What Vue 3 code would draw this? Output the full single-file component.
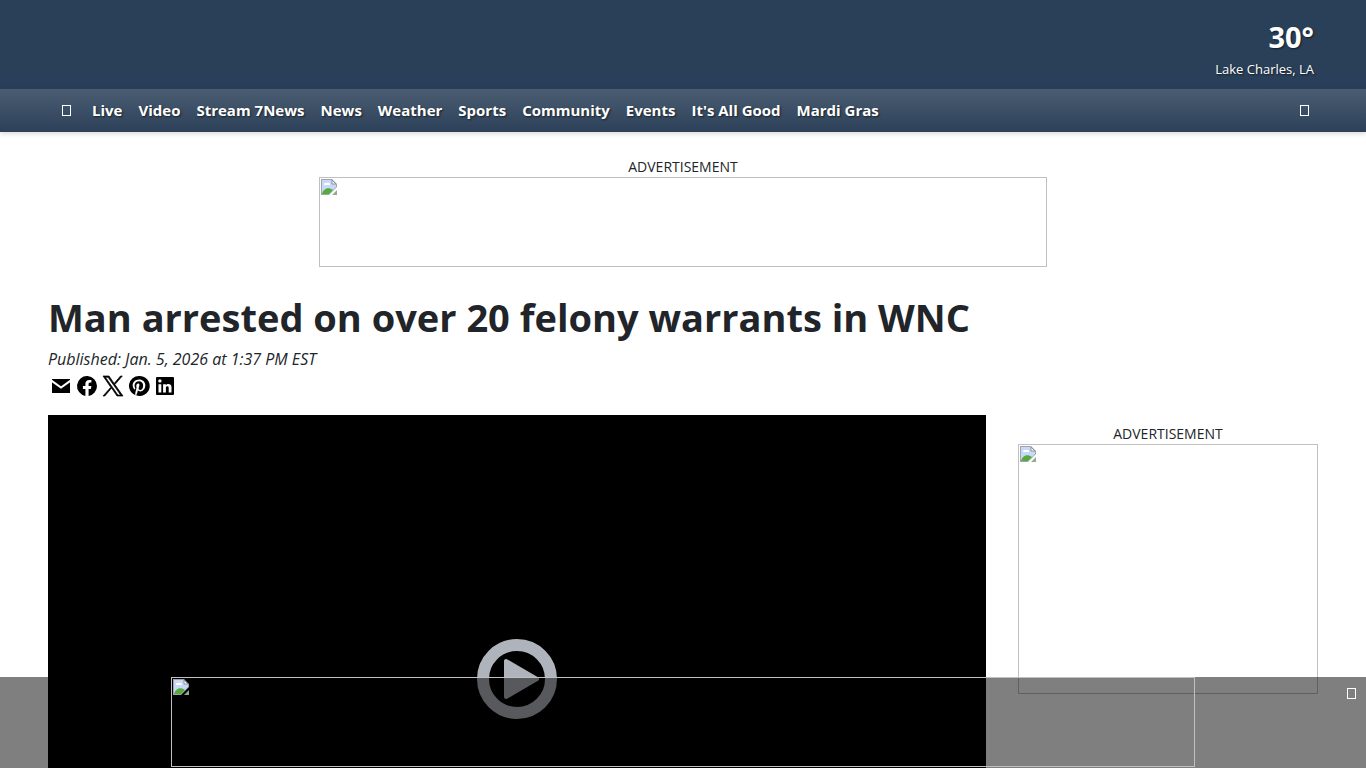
<script setup>
const links = ['Live', 'Video', 'Stream 7News', 'News', 'Weather', 'Sports', 'Community', 'Events', "It's All Good", 'Mardi Gras']
const shares = [
  { name: 'Email', path: 'M3 5h18v14H3z' },
  { name: 'Facebook', path: 'M22 12a10 10 0 1 0-11.6 9.9v-7H7.9V12h2.5V9.8c0-2.5 1.5-3.9 3.8-3.9 1.1 0 2.2.2 2.2.2v2.5h-1.2c-1.2 0-1.6.8-1.6 1.5V12h2.8l-.5 2.9h-2.3v7A10 10 0 0 0 22 12z' },
  { name: 'X', path: 'M13.9 10.5 21.3 2h-1.8l-6.4 7.4L8 2H2l7.8 11.3L2 22h1.8l6.8-7.9L16 22h6zm-2.4 2.8-.8-1.1L4.4 3.3h2.7l5.1 7.2.8 1.1 6.6 9.4h-2.7z' },
  { name: 'Pinterest', path: 'M12 2a10 10 0 0 0-3.7 19.3c-.1-.8-.1-2 .1-2.9l1.2-5s-.3-.6-.3-1.5c0-1.4.8-2.4 1.8-2.4.9 0 1.3.6 1.3 1.4 0 .8-.5 2.1-.8 3.3-.2 1 .5 1.8 1.5 1.8 1.8 0 3.1-1.9 3.1-4.6 0-2.4-1.7-4.1-4.2-4.1-2.8 0-4.5 2.1-4.5 4.3 0 .9.3 1.8.7 2.3.1.1.1.2.1.3l-.3 1.1c0 .2-.1.2-.3.1-1.2-.6-2-2.4-2-3.8 0-3.1 2.3-6 6.5-6 3.4 0 6.1 2.4 6.1 5.7 0 3.4-2.1 6.1-5.1 6.1-1 0-1.9-.5-2.3-1.1l-.6 2.4c-.2.9-.8 1.9-1.2 2.6A10 10 0 1 0 12 2z' },
  { name: 'LinkedIn', path: 'M20 3a1 1 0 0 1 1 1v16a1 1 0 0 1-1 1H4a1 1 0 0 1-1-1V4a1 1 0 0 1 1-1zm-1.5 15.5v-5.3a3.3 3.3 0 0 0-3.3-3.2c-.8 0-1.8.5-2.3 1.3v-1.1h-2.8v8.3h2.8v-4.9a1.4 1.4 0 0 1 2.8 0v4.9zM6.9 8.6a1.7 1.7 0 1 0 0-3.4 1.7 1.7 0 0 0 0 3.4zm1.4 9.9v-8.3H5.5v8.3z' }
]
</script>

<template>
  <div class="page">
    <header>
      <div class="masthead">
        <div class="temp">30°</div>
        <div class="place">Lake Charles, LA</div>
      </div>
      <nav>
        <button class="icon-btn menu" type="button" aria-label="Menu"><span class="tofu"></span></button>
        <a v-for="l in links" :key="l" href="#">{{ l }}</a>
        <button class="icon-btn search" type="button" aria-label="Search"><span class="tofu"></span></button>
      </nav>
    </header>

    <main>
      <aside class="top-ad">
        <div class="ad-label">ADVERTISEMENT</div>
        <div class="ad leaderboard">
          <svg class="broken" viewBox="0 0 16 16"><use href="#broken-image" /></svg>
        </div>
      </aside>

      <h1>Man arrested on over 20 felony warrants in WNC</h1>
      <p class="published">Published: Jan. 5, 2026 at 1:37 PM EST</p>
      <div class="shares">
        <a v-for="s in shares" :key="s.name" href="#" :aria-label="s.name">
          <svg viewBox="0 0 24 24">
            <path :d="s.path" fill-rule="evenodd" :class="{ bold: s.name === 'X' }" />
            <path v-if="s.name === 'Email'" d="M2 6.4l10 7.2 10-7.2" fill="none" stroke="#fff" stroke-width="2" />
          </svg>
        </a>
      </div>

      <div class="columns">
        <div class="video">
          <button class="play" type="button" aria-label="Play video">
            <svg viewBox="0 0 80 80">
              <circle cx="40" cy="40" r="34" fill="none" stroke="#afb3bb" stroke-width="12" />
              <path d="M29 22v36l31-18z" fill="#afb3bb" stroke="#afb3bb" stroke-width="4" stroke-linejoin="round" />
            </svg>
          </button>
        </div>
        <aside class="side">
          <div class="ad-label">ADVERTISEMENT</div>
          <div class="ad rectangle">
            <svg class="broken" viewBox="0 0 16 16"><use href="#broken-image" /></svg>
          </div>
        </aside>
      </div>
    </main>

    <div class="sticky-ad">
      <div class="ad anchor">
        <svg class="broken" viewBox="0 0 16 16"><use href="#broken-image" /></svg>
      </div>
      <button class="close" type="button" aria-label="Close advertisement"><span class="tofu"></span></button>
    </div>

    <svg class="defs" aria-hidden="true">
      <symbol id="broken-image" viewBox="0 0 16 16">
        <path d="M0 0h11l5 5v3l-8 8H0z" fill="#a0a4aa" />
        <path d="M1 1h10v4h4v3l-7 7H1z" fill="#c8d8f8" />
        <path d="M3 6a2 2 0 0 1 3-2 2 2 0 0 1 3 2z" fill="#fff" />
        <path d="M1 15c1-5 6-8 11-4l-4 4z" fill="#56ab3e" />
        <path d="M11 1v4h4z" fill="#fff" stroke="#8c9198" />
        <path d="M16 11v5h-5z" fill="#8fae88" />
      </symbol>
    </svg>
  </div>
</template>

<style>
body { margin: 0; background: #fff; }
</style>

<style scoped>
.page { font-family: "Segoe UI", "Open Sans", "Noto Sans", sans-serif; color: #212529; }
a { color: inherit; text-decoration: none; }
button { padding: 0; border: 0; background: none; color: inherit; cursor: pointer; }
header { color: #fff; box-shadow: 0 2px 5px rgba(0, 0, 0, .15); }
.masthead {
  box-sizing: border-box;
  height: 89px;
  padding: 17px 52px 0;
  background: linear-gradient(#2a4059 80%, #293d5a);
  text-align: right;
  text-shadow: 1px 1px 2px rgba(0, 0, 0, .6);
}
.temp { font-size: 29px; line-height: 40px; font-weight: 700; }
.place { font-size: 13px; line-height: 24px; }
nav {
  display: flex;
  align-items: center;
  gap: 16px;
  height: 43px;
  padding: 0 48px;
  background: linear-gradient(#4a5d72, #2c4059);
  font-size: 15px;
  font-weight: 700;
  text-shadow: 1px 1px 2px rgba(0, 0, 0, .6);
}
nav a { padding-bottom: 2px; white-space: nowrap; }
.icon-btn { display: flex; justify-content: center; width: 28px; }
.menu { width: 36px; margin-right: -8px; }
.search { margin-left: auto; }
.tofu { display: block; box-sizing: border-box; width: 9px; height: 11px; border: 1px solid #fff; }
main { padding: 24px 48px 0; }
.ad-label { font-size: 14px; line-height: 21px; text-align: center; }
.ad { box-sizing: border-box; border: 1px solid #c0c0c0; padding: 1px; }
.broken { display: block; width: 16px; height: 16px; }
.leaderboard { max-width: 728px; height: 90px; margin: 0 auto; }
h1 { margin: 24px 0 0; font-size: 38px; line-height: 52px; font-weight: 700; }
.published { margin: 4px 0 0; font-size: 16px; line-height: 24px; font-style: italic; }
.shares { display: flex; gap: 2px; margin-top: 3px; padding-left: 1px; }
.shares a { display: block; width: 24px; height: 24px; }
.shares svg { display: block; width: 24px; height: 24px; }
.bold { stroke: #000; stroke-width: .7; }
.columns { display: grid; grid-template-columns: minmax(0, 1fr) 300px; gap: 32px; align-items: start; margin-top: 17px; }
.video { display: flex; align-items: center; justify-content: center; aspect-ratio: 16 / 9; background: #000; }
.play, .play svg { display: block; width: 80px; height: 80px; }
.side { padding-top: 8px; }
.rectangle { height: 250px; }
.sticky-ad {
  position: fixed;
  right: 0;
  bottom: 0;
  left: 0;
  padding-bottom: 1px;
  background: rgba(0, 0, 0, .5);
  color: #fff;
}
.anchor { max-width: 1024px; height: 90px; margin: 0 auto; }
.close { position: absolute; top: 11px; right: 10px; }
.defs { position: absolute; width: 0; height: 0; }
</style>
